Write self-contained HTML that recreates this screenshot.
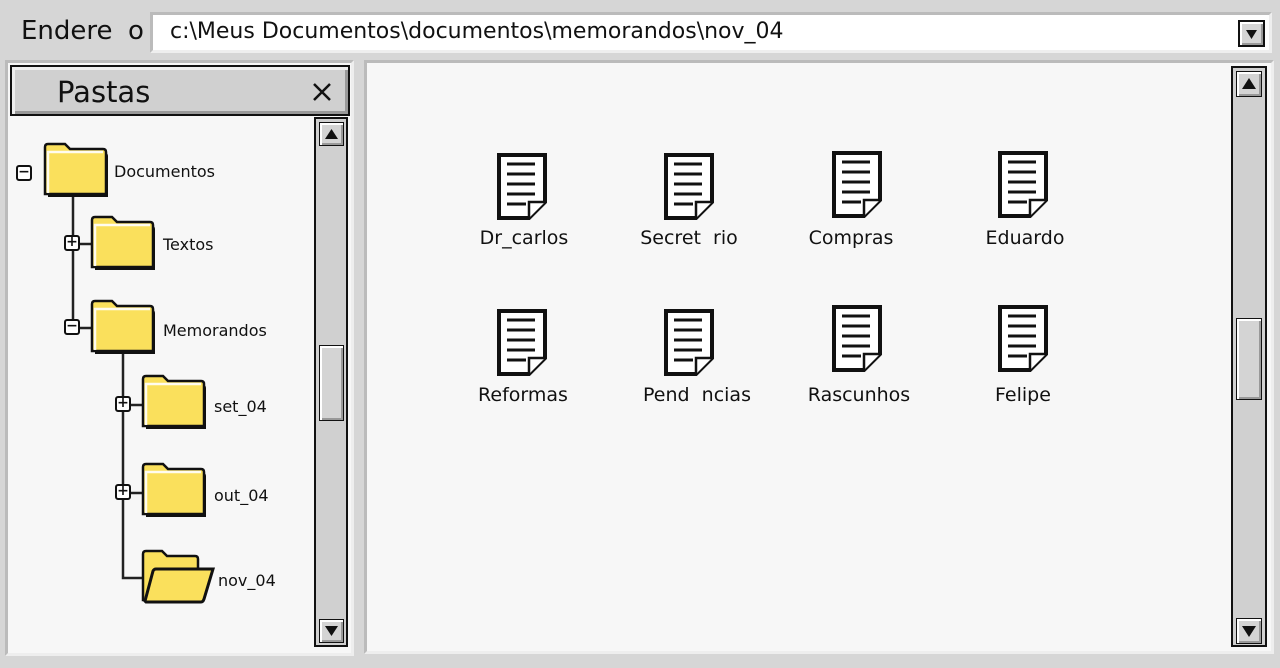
<!DOCTYPE html>
<html><head><meta charset="utf-8"><style>
*{margin:0;padding:0;box-sizing:border-box}
body{width:1280px;height:668px;background:#d6d6d6;position:relative;overflow:hidden;font-family:"DejaVu Sans","Liberation Sans",sans-serif;color:#111}
.a{position:absolute}
.lbl{position:absolute;font-size:16px;line-height:1}
.dl{position:absolute;font-size:19px;width:160px;text-align:center;line-height:1}
.btn{position:absolute;background:#d4d4d4;border:2px solid #111;box-shadow:inset 2px 2px 0 #fff,inset -2px -2px 0 #999}
.box{position:absolute;width:16px;height:16px;border:2px solid #111;border-radius:3px;background:#fff;font-size:14px;line-height:11px;text-align:center;font-weight:bold}
</style></head><body>
<div class="a" style="left:21px;top:16px;font-size:26px">Endere</div>
<div class="a" style="left:128px;top:16px;font-size:26px">o</div>
<div class="a" style="left:150px;top:12px;width:1122px;height:41px;background:#fff;border:3px solid #bbb;border-right-color:#eee;border-bottom-color:#eee"></div>
<div class="a" style="left:170px;top:19px;font-size:22px">c:\Meus Documentos\documentos\memorandos\nov_04</div>
<div class="btn" style="left:1238px;top:20px;width:27px;height:27px"><svg width="23" height="23" style="position:absolute;left:0;top:0"><path d="M6 8h11l-5.5 9z" fill="#111"/></svg></div>

<div class="a" style="left:5px;top:60px;width:349px;height:596px;background:#f7f7f7;border:3px solid #bbb;border-right-color:#eee;border-bottom-color:#eee"></div>
<div class="a" style="left:10px;top:65px;width:340px;height:51px;background:#d0d0d0;border:2px solid #111;box-shadow:inset 3px 3px 0 #eee,inset -3px -3px 0 #999"></div>
<div class="a" style="left:57px;top:75px;font-size:29px">Pastas</div>
<svg class="a" style="left:311px;top:81px" width="22" height="22"><path d="M3 3L19 19M19 3L3 19" stroke="#111" stroke-width="2.5"/></svg>

<div class="a" style="left:314px;top:117px;width:34px;height:530px;background:#d0d0d0;border:2px solid #111"></div>
<div class="btn" style="left:319px;top:122px;width:25px;height:24px;border-width:1px"><svg width="23" height="22" style="position:absolute;left:0;top:0"><path d="M5 16h13l-6.5-10z" fill="#111"/></svg></div>
<div class="btn" style="left:319px;top:345px;width:25px;height:76px;border-width:1px"></div>
<div class="btn" style="left:319px;top:619px;width:25px;height:24px;border-width:1px"><svg width="23" height="22" style="position:absolute;left:0;top:0"><path d="M5 6h13l-6.5 10z" fill="#111"/></svg></div>

<svg class="a" style="left:0;top:0" width="360" height="668">
<defs>
<g id="fd"><path d="M4 54V8q0-3 3-3h16l5 5h33q3 0 3 3v41z" fill="#111"/><path d="M1 51V4q0-3 3-3h17l5 5h33q3 0 3 3v42z" fill="#fae05c" stroke="#111" stroke-width="2.5"/><path d="M4 50V9h55" fill="none" stroke="#fff" stroke-width="2.5" opacity=".9"/></g>
</defs>
<path d="M73 196V328M73 244H91M73 328H91M123 353V578H145M123 405H142M123 493H142" stroke="#222" stroke-width="2.5" fill="none"/>
<use href="#fd" x="44" y="143"/>
<use href="#fd" x="91" y="216"/>
<use href="#fd" x="91" y="300"/>
<use href="#fd" x="142" y="375"/>
<use href="#fd" x="142" y="463"/>
<g transform="translate(142,550)"><path d="M1 50V4q0-3 3-3h16l5 5h28q3 0 3 3v40z" fill="#fae05c" stroke="#111" stroke-width="2.5"/><path d="M3 51L11 21q1-2 3-2h57l-9 30q-1 3-3 3H4z" fill="#fae05c" stroke="#111" stroke-width="3"/></g>
</svg>
<div class="box" style="left:16px;top:165px">−</div>
<div class="box" style="left:64px;top:235px">+</div>
<div class="box" style="left:64px;top:319px">−</div>
<div class="box" style="left:115px;top:396px">+</div>
<div class="box" style="left:115px;top:484px">+</div>
<div class="lbl" style="left:114px;top:164px">Documentos</div>
<div class="lbl" style="left:163px;top:237px">Textos</div>
<div class="lbl" style="left:163px;top:323px">Memorandos</div>
<div class="lbl" style="left:214px;top:399px">set_04</div>
<div class="lbl" style="left:214px;top:488px">out_04</div>
<div class="lbl" style="left:218px;top:573px">nov_04</div>

<div class="a" style="left:364px;top:60px;width:910px;height:594px;background:#f7f7f7;border:3px solid #bbb;border-right-color:#eee;border-bottom-color:#eee"></div>
<div class="a" style="left:1231px;top:66px;width:36px;height:581px;background:#d0d0d0;border:2px solid #111"></div>
<div class="btn" style="left:1236px;top:71px;width:26px;height:26px;border-width:1px"><svg width="24" height="24" style="position:absolute;left:0;top:0"><path d="M5 17h14l-7-11z" fill="#111"/></svg></div>
<div class="btn" style="left:1236px;top:318px;width:26px;height:82px;border-width:1px"></div>
<div class="btn" style="left:1236px;top:618px;width:26px;height:26px;border-width:1px"><svg width="24" height="24" style="position:absolute;left:0;top:0"><path d="M5 7h14l-7 11z" fill="#111"/></svg></div>

<svg class="a" style="left:0;top:0" width="1280" height="668">
<defs><g id="dc"><path d="M2 2H48V49L32 65H2z" fill="#fff" stroke="#111" stroke-width="4"/><path d="M48 49H32V65" fill="#fff" stroke="#111" stroke-width="2.5"/><path d="M10 11H38M10 21H38M10 31H38M10 41H38M10 51H29" stroke="#111" stroke-width="3"/></g></defs>
<use href="#dc" x="497" y="153"/><use href="#dc" x="664" y="153"/><use href="#dc" x="832" y="151"/><use href="#dc" x="998" y="151"/>
<use href="#dc" x="497" y="309"/><use href="#dc" x="664" y="309"/><use href="#dc" x="832" y="305"/><use href="#dc" x="998" y="305"/>
</svg>
<div class="dl" style="left:444px;top:229px">Dr_carlos</div>
<div class="dl" style="left:609px;top:229px">Secret&nbsp;&nbsp;rio</div>
<div class="dl" style="left:771px;top:229px">Compras</div>
<div class="dl" style="left:945px;top:229px">Eduardo</div>
<div class="dl" style="left:443px;top:386px">Reformas</div>
<div class="dl" style="left:617px;top:386px">Pend&nbsp;&nbsp;ncias</div>
<div class="dl" style="left:779px;top:386px">Rascunhos</div>
<div class="dl" style="left:943px;top:386px">Felipe</div>
</body></html>
